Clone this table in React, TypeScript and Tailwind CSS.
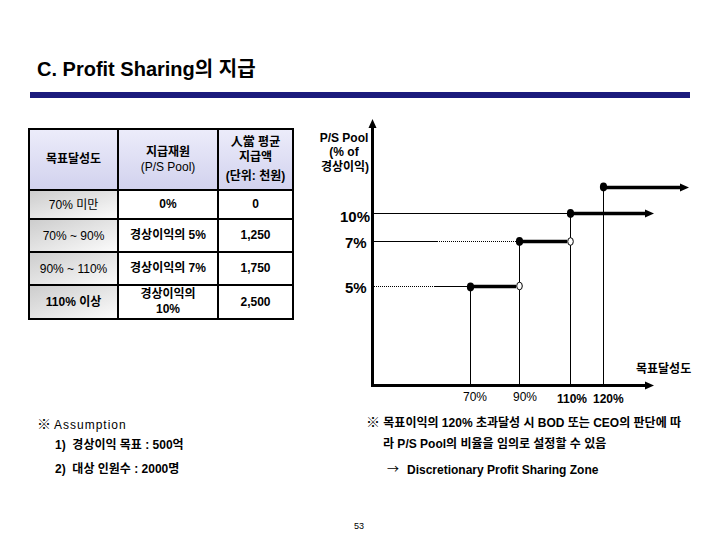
import React from "react";

const headCell =
  "bg-linear-to-b from-[#ececfa] to-[#d2d2ee] flex flex-col items-center justify-center text-center font-bold text-[12px] leading-[15px]";
const firstCol =
  "bg-linear-to-br from-[#cdcdcd] to-[#fbfbfb] flex items-center justify-center text-[12px]";
const cell = "bg-white flex flex-col items-center justify-center text-center text-[12px] font-bold leading-[15px]";

function Chart() {
  return (
    <svg
      width={420}
      height={295}
      viewBox="300 115 420 295"
      className="ml-[6px] shrink-0"
    >
      <g stroke="#000" strokeWidth={1} fill="none">
        <line x1={374} y1={213.5} x2={570} y2={213.5} />
        <line x1={374} y1={241.5} x2={437} y2={241.5} />
        <line x1={437} y1={241.5} x2={519} y2={241.5} strokeDasharray="1 1" />
        <line x1={374} y1={286.5} x2={435} y2={286.5} strokeDasharray="1 1" />
        <line x1={435} y1={286.5} x2={470} y2={286.5} />
        <line x1={470.5} y1={287} x2={470.5} y2={385} />
        <line x1={519.5} y1={241} x2={519.5} y2={385} />
        <line x1={570.5} y1={213} x2={570.5} y2={385} />
        <line x1={603.5} y1={187} x2={603.5} y2={385} />
      </g>
      {/* axes */}
      <g stroke="#000" strokeWidth={3}>
        <line x1={372.5} y1={387} x2={372.5} y2={127} />
        <line x1={371} y1={385.5} x2={646} y2={385.5} />
      </g>
      <polygon points="372.5,119 368.5,128 376.5,128" fill="#000" />
      <polygon points="654,385.5 645,381.5 645,389.5" fill="#000" />
      {/* thick segments */}
      <g stroke="#000" strokeWidth={3.5}>
        <line x1={470} y1={286.5} x2={516} y2={286.5} />
        <line x1={519} y1={241.5} x2={567} y2={241.5} />
        <line x1={570} y1={213.5} x2={646} y2={213.5} />
        <line x1={603} y1={187.5} x2={681} y2={187.5} />
      </g>
      <polygon points="654,213.5 645,209.5 645,217.5" fill="#000" />
      <polygon points="689,187.5 680,183.5 680,191.5" fill="#000" />
      {/* dots */}
      <g fill="#000">
        <ellipse cx={470.5} cy={287} rx={3.6} ry={4.4} />
        <ellipse cx={519.5} cy={241.5} rx={3.6} ry={4.4} />
        <ellipse cx={570.5} cy={213.5} rx={3.6} ry={4.4} />
        <ellipse cx={603.5} cy={187} rx={3.6} ry={4.4} />
      </g>
      <g fill="#fff" stroke="#000" strokeWidth={1}>
        <ellipse cx={519.5} cy={286} rx={2.8} ry={3.8} />
        <ellipse cx={570.5} cy={241.5} rx={2.8} ry={3.8} />
      </g>
      {/* labels */}
      <g fill="#000" fontWeight="bold" fontSize={12}>
        <text x={344} y={142} textAnchor="middle">P/S Pool</text>
        <text x={344} y={156} textAnchor="middle">(% of</text>
        <text x={345} y={171} textAnchor="middle">경상이익)</text>
        <text x={636} y={373}>목표달성도</text>
      </g>
      <g fill="#000" fontWeight="bold" fontSize={15}>
        <text x={340} y={222}>10%</text>
        <text x={345} y={248}>7%</text>
        <text x={345} y={293}>5%</text>
      </g>
      <g fill="#000" fontSize={12}>
        <text x={463} y={401}>70%</text>
        <text x={513} y={401}>90%</text>
        <text x={557} y={403} fontWeight="bold">110%</text>
        <text x={593} y={403} fontWeight="bold">120%</text>
      </g>
    </svg>
  );
}

export default function App() {
  return (
    <div className="w-[720px] h-[540px] bg-white overflow-hidden text-black font-['Liberation_Sans','Noto_Sans_CJK_KR',sans-serif]">
      <div className="pt-[57px] pl-[37px] h-[81px]">
        <h1 className="text-[20px] font-bold leading-[24px] whitespace-nowrap">
          C. Profit Sharing의 지급
        </h1>
      </div>
      <div className="mt-[11px] ml-[30px] w-[660px] h-[6px] bg-[#1b1b7d]" />
      <div className="flex items-start mt-[17px]">
        <div className="ml-[28px] mt-[13px] w-[266px] border-2 border-black bg-black">
          <div className="grid grid-cols-[87px_98px_73px] grid-rows-[59px_27px_31px_31px_32px] gap-[2px]">
            <div className={headCell}>목표달성도</div>
            <div className={headCell}>
              <span>지급재원</span>
              <span className="font-normal">(P/S Pool)</span>
            </div>
            <div className={headCell}>
              <span>人當 평균</span>
              <span>지급액</span>
              <span className="mt-[4px]">(단위: 천원)</span>
            </div>

            <div className={firstCol}>70% 미만</div>
            <div className={cell}>0%</div>
            <div className={cell}>0</div>

            <div className={firstCol}>70% ~ 90%</div>
            <div className={cell}>경상이익의 5%</div>
            <div className={cell}>1,250</div>

            <div className={firstCol}>90% ~ 110%</div>
            <div className={cell}>경상이익의 7%</div>
            <div className={cell}>1,750</div>

            <div className={firstCol + " font-bold"}>110% 이상</div>
            <div className={cell}>
              <span>경상이익의</span>
              <span>10%</span>
            </div>
            <div className={cell}>2,500</div>
          </div>
        </div>
        <Chart />
      </div>
      <div className="flex h-[100px] text-[12px] leading-[20px]">
        <div className="w-[328px] pl-[37px]">
          <div className="mt-[4px] whitespace-nowrap">
            <span className="font-bold text-[14px]">※</span>
            <span className="ml-[3px] tracking-[1px]">Assumption</span>
          </div>
          <div className="pl-[18px] font-bold whitespace-nowrap">1)&nbsp; 경상이익 목표 : 500억</div>
          <div className="mt-[4px] pl-[18px] font-bold whitespace-nowrap">2)&nbsp; 대상 인원수 : 2000명</div>
        </div>
        <div className="pl-[38px] font-bold">
          <div className="mt-[2px] whitespace-nowrap">
            <span className="text-[14px]">※</span> 목표이익의 120% 초과달성 시 BOD 또는 CEO의 판단에 따
          </div>
          <div className="mt-[1px] pl-[17px] whitespace-nowrap">라 P/S Pool의 비율을 임의로 설정할 수 있음</div>
          <div className="mt-[5px] pl-[21px] whitespace-nowrap">
            <span className="font-normal font-['Noto_Sans_CJK_KR',sans-serif]">→</span>
            <span className="ml-[8px]">Discretionary Profit Sharing Zone</span>
          </div>
        </div>
      </div>
      <div className="mt-[10px] pl-[354px] text-[9px] leading-[12px]">53</div>
    </div>
  );
}
